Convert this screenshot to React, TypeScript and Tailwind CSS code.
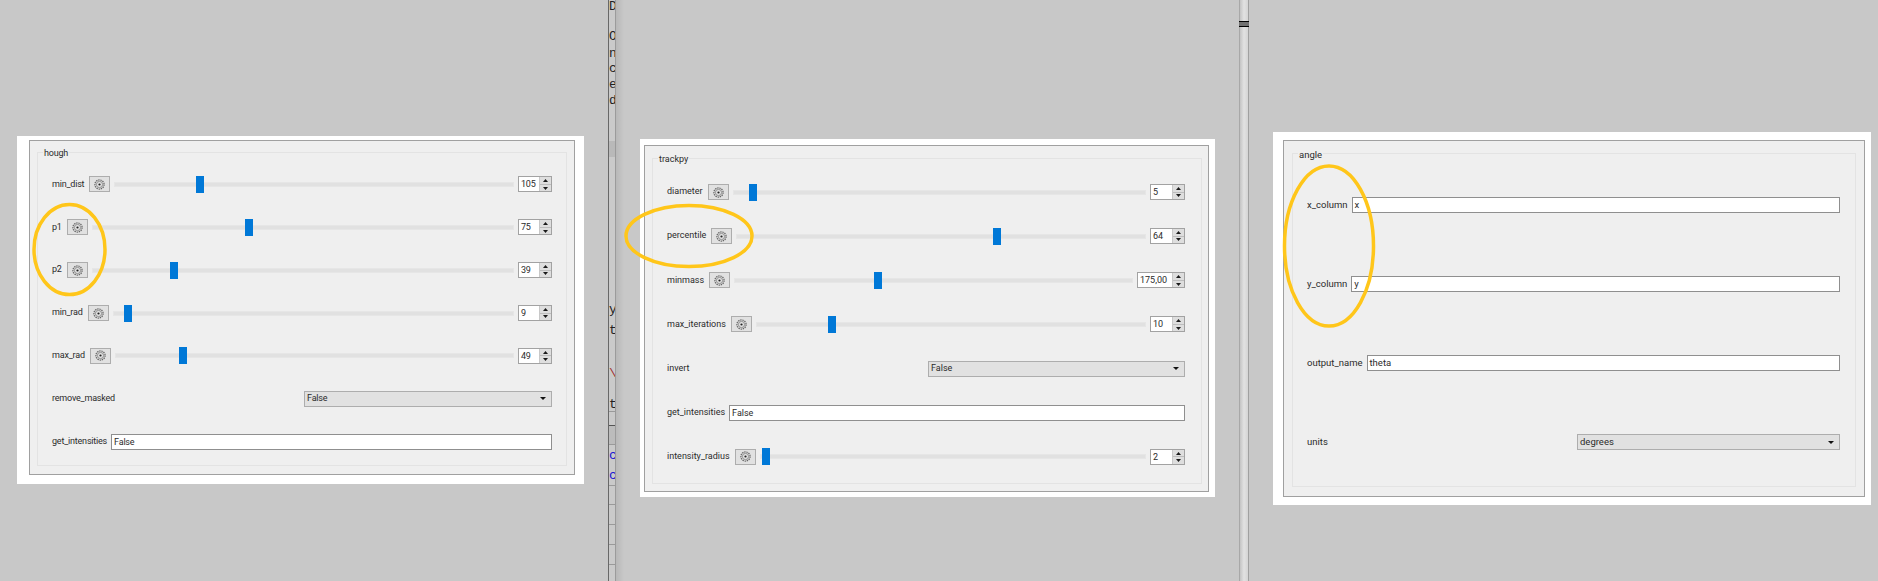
import React from "react";

type Row =
  | { kind: "slider"; label: string; value: string; thumb: number; spin: string }
  | { kind: "combo"; label: string; value: string; width: string }
  | { kind: "text"; label: string; value: string };

const houghRows: Row[] = [
  { kind: "slider", label: "min_dist", value: "105", thumb: 21.4, spin: "w-[34px]" },
  { kind: "slider", label: "p1", value: "75", thumb: 37.3, spin: "w-[34px]" },
  { kind: "slider", label: "p2", value: "39", thumb: 19.4, spin: "w-[34px]" },
  { kind: "slider", label: "min_rad", value: "9", thumb: 3.5, spin: "w-[34px]" },
  { kind: "slider", label: "max_rad", value: "49", thumb: 16.9, spin: "w-[34px]" },
  { kind: "combo", label: "remove_masked", value: "False", width: "w-[248px]" },
  { kind: "text", label: "get_intensities", value: "False" },
];

const trackpyRows: Row[] = [
  { kind: "slider", label: "diameter", value: "5", thumb: 4.8, spin: "w-[35px]" },
  { kind: "slider", label: "percentile", value: "64", thumb: 63.7, spin: "w-[35px]" },
  { kind: "slider", label: "minmass", value: "175,00", thumb: 36.1, spin: "w-[48px]" },
  { kind: "slider", label: "max_iterations", value: "10", thumb: 19.3, spin: "w-[35px]" },
  { kind: "combo", label: "invert", value: "False", width: "w-[257px]" },
  { kind: "text", label: "get_intensities", value: "False" },
  { kind: "slider", label: "intensity_radius", value: "2", thumb: 1.3, spin: "w-[35px]" },
];

const angleRows: Row[] = [
  { kind: "text", label: "x_column", value: "x" },
  { kind: "text", label: "y_column", value: "y" },
  { kind: "text", label: "output_name", value: "theta" },
  { kind: "combo", label: "units", value: "degrees", width: "w-[263px]" },
];

const GearButton = () => (
  <div className="ml-[5px] flex h-[16px] w-[21px] shrink-0 items-center justify-center border border-[#adadad] bg-[#e1e1e1]">
    <svg width="11" height="11" viewBox="0 0 11 11" fill="none">
      <circle cx="5.5" cy="5.5" r="4.6" stroke="#666" strokeWidth="1.2" strokeDasharray="1.4 0.8" />
      <circle cx="5.5" cy="5.5" r="3.1" stroke="#888" strokeWidth="0.9" />
      <circle cx="5.5" cy="5.5" r="1.1" fill="#222" />
    </svg>
  </div>
);

const Arrow = ({ up }: { up: boolean }) => (
  <svg width="5" height="3" viewBox="0 0 5 3" className="block">
    <path d={up ? "M2.5 0L5 3H0z" : "M0 0H5L2.5 3z"} fill="#1a1a1a" />
  </svg>
);

const SpinBox = ({ value, width }: { value: string; width: string }) => (
  <div className={`ml-[5px] flex h-[16px] shrink-0 border border-[#a2a2a2] bg-white ${width}`}>
    <span className="flex-1 pl-[2px] leading-[14px]">{value}</span>
    <div className="flex w-[12px] flex-col border-l border-[#c8c8c8] bg-[#dedede]">
      <div className="flex flex-1 items-center justify-center border-b border-[#bdbdbd]">
        <Arrow up />
      </div>
      <div className="flex flex-1 items-center justify-center">
        <Arrow up={false} />
      </div>
    </div>
  </div>
);

const Slider = ({ thumb }: { thumb: number }) => (
  <div className="relative ml-[5px] h-[3px] min-w-0 flex-1 bg-[#e1e1e1] outline outline-1 outline-[#e6e6e6]">
    <div
      className="absolute top-[-7px] h-[17px] w-[8px] -translate-x-1/2 bg-[#0078d7]"
      style={{ left: `${thumb}%` }}
    />
  </div>
);

const FormRow = ({ row }: { row: Row }) => (
  <div className="flex flex-1 items-center">
    <span className="shrink-0">{row.label}</span>
    {row.kind === "slider" && (
      <>
        <GearButton />
        <Slider thumb={row.thumb} />
        <SpinBox value={row.value} width={row.spin} />
      </>
    )}
    {row.kind === "combo" && (
      <div className={`ml-auto flex h-[16px] items-center justify-between border border-[#adadad] bg-[#e1e1e1] pl-[2px] pr-[5px] ${row.width}`}>
        <span>{row.value}</span>
        <svg width="6" height="3" viewBox="0 0 6 3">
          <path d="M0 0H6L3 3z" fill="#111" />
        </svg>
      </div>
    )}
    {row.kind === "text" && (
      <div className="ml-[4px] h-[16px] flex-1 border border-[#8f8f8f] bg-white pl-[2px] leading-[14px]">
        {row.value}
      </div>
    )}
  </div>
);

const Panel = ({
  title,
  rows,
  outer,
  frame,
  group,
}: {
  title: string;
  rows: Row[];
  outer: string;
  frame: string;
  group: string;
}) => (
  <div className={`flex flex-col bg-white ${outer}`}>
    <div className={`flex flex-1 flex-col border border-[#a0a0a0] bg-[#efefef] ${frame}`}>
      <div className={`relative flex flex-1 flex-col border border-[#e3e3e3] pl-[14px] ${group}`}>
        <span className="absolute left-[5px] top-[-6px] bg-[#efefef] px-[1px] leading-[13px]">{title}</span>
        {rows.map((row) => (
          <FormRow key={row.label} row={row} />
        ))}
      </div>
    </div>
  </div>
);

// text of the window behind, cut off by the splitter
const fragments = [
  { text: "D", className: "top-[0px] text-[#222]" },
  { text: "Oj", className: "top-[30px] text-[#222]" },
  { text: "n(", className: "top-[47px] text-[#222]" },
  { text: "cl", className: "top-[62px] text-[#222]" },
  { text: "e:", className: "top-[78px] text-[#222]" },
  { text: "d:", className: "top-[94px] text-[#222]" },
  { text: "y", className: "top-[303px] text-[#222]" },
  { text: "t(", className: "top-[324px] text-[#222]" },
  { text: "\\", className: "top-[367px] text-[#a03030]" },
  { text: "t'", className: "top-[398px] text-[#222]" },
  { text: "c", className: "top-[449px] text-[#1515d0]" },
  { text: "c", className: "top-[469px] text-[#1515d0]" },
];

const gridLines = [
  "top-[411px] bg-[#9a9a9a]",
  "top-[425px] bg-[#555]",
  "top-[444px] bg-[#9a9a9a]",
  "top-[485px] bg-[#9a9a9a]",
  "top-[504px] bg-[#9a9a9a]",
  "top-[524px] bg-[#9a9a9a]",
  "top-[544px] bg-[#9a9a9a]",
  "top-[564px] bg-[#9a9a9a]",
];

const CodeSliver = () => (
  <div className="relative h-full w-[8px] shrink-0 overflow-hidden border-x border-l-[#686868] border-r-[#9b9b9b] bg-[#cacaca] font-['Liberation_Mono',monospace] text-[13px] leading-[14px]">
    <div className="absolute inset-x-0 top-[141px] h-[16px] bg-[#b9b9b9]" />
    <div className="absolute inset-x-0 top-[425px] h-[19px] bg-[#bcbcbc]" />
    {gridLines.map((line) => (
      <div key={line} className={`absolute inset-x-0 h-px ${line}`} />
    ))}
    {fragments.map((f) => (
      <span key={f.className} className={`absolute left-0 ${f.className}`}>
        {f.text}
      </span>
    ))}
  </div>
);

const Splitter = () => (
  <div className="relative h-full w-[10px] shrink-0 border-x border-l-[#a8a8a8] border-r-[#a0a0a0] bg-gradient-to-r from-[#c4c4c4] via-[#e2e2e2] to-[#d4d4d4]">
    <div className="absolute inset-x-[-1px] top-[21px] h-[6px] border-y border-black bg-[#707070]" />
  </div>
);

export default function App() {
  return (
    <div className="relative flex h-[581px] w-[1878px] overflow-hidden bg-[#c8c8c8] font-['Roboto',sans-serif] text-[9px] tracking-[-0.2px] text-[#2b2b2b]">
      <div className="h-full w-[608px] shrink-0 pl-[17px] pt-[136px]">
        <Panel
          title="hough"
          rows={houghRows}
          outer="h-[348px] w-[567px] pl-[12px] pr-[9px] pt-[4px] pb-[9px]"
          frame="pl-[7px] pr-[7px] pt-[11px] pb-[8px]"
          group="pr-[14px] pt-[10px] pb-[2px]"
        />
      </div>
      <CodeSliver />
      <div className="h-full w-[623px] shrink-0 bg-gradient-to-r from-[#b8b8b8] to-[#c8c8c8] to-[8px] pl-[24px] pt-[139px]">
        <Panel
          title="trackpy"
          rows={trackpyRows}
          outer="h-[358px] w-[575px] pl-[4px] pr-[6px] pt-[6px] pb-[5px] tracking-normal"
          frame="pl-[7px] pr-[6px] pt-[12px] pb-[7px]"
          group="pr-[16px] pt-[11px] pb-[4px]"
        />
      </div>
      <Splitter />
      <div className="h-full flex-1 pl-[24px] pt-[132px]">
        <Panel
          title="angle"
          rows={angleRows}
          outer="h-[373px] w-[598px] pl-[10px] pr-[6px] pt-[8px] pb-[8px] text-[9.5px] tracking-normal"
          frame="pl-[8px] pr-[8px] pt-[12px] pb-[9px]"
          group="pr-[15px] pt-[11px] pb-[4px]"
        />
      </div>
      <svg className="pointer-events-none absolute inset-0" width="1878" height="581" fill="none" stroke="#ffc61a" strokeWidth="3.5">
        <ellipse cx="69.5" cy="249.5" rx="35.5" ry="45" />
        <ellipse cx="689" cy="236" rx="63" ry="30.5" />
        <ellipse cx="1329" cy="246" rx="44.5" ry="80" />
      </svg>
    </div>
  );
}
